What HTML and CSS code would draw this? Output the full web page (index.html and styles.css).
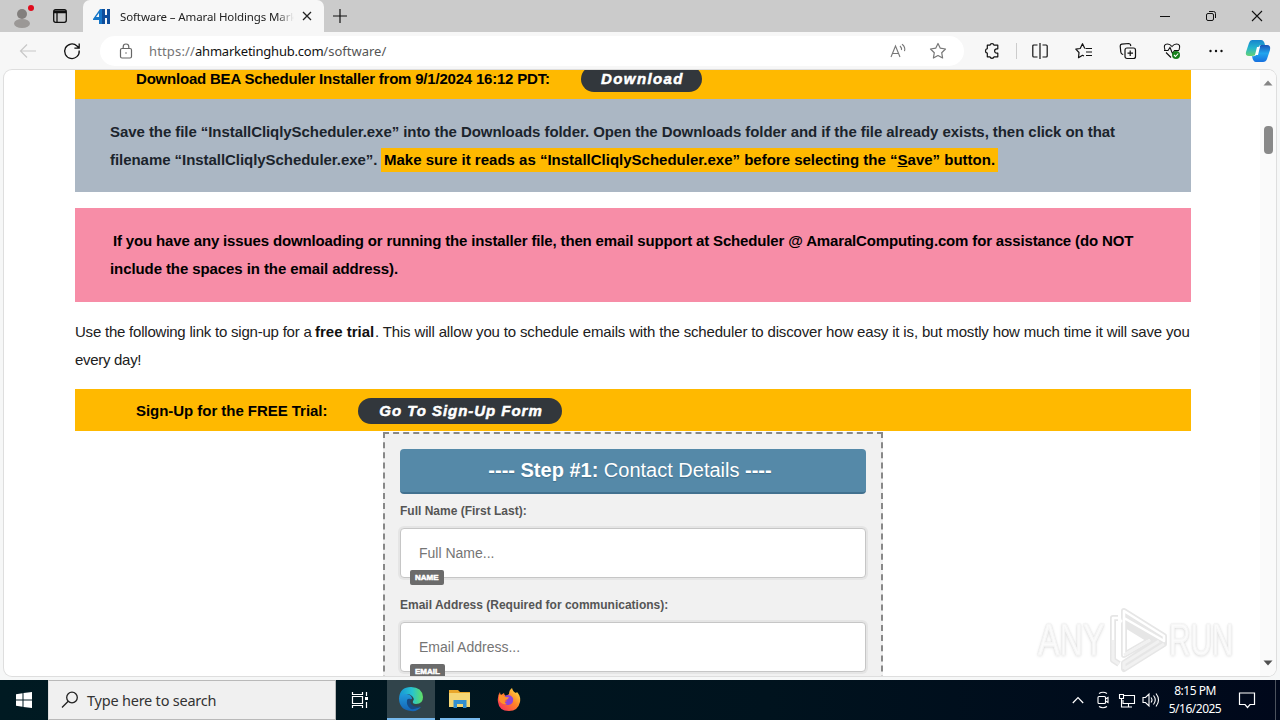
FILE: index.html
```html
<!DOCTYPE html>
<html lang="en">
<head>
<meta charset="utf-8">
<title>Software – Amaral Holdings Marketing Hub</title>
<link rel="stylesheet" href="styles.css">
</head>
<body>
<div class="desktop">
  <header class="tabbar">
    <svg class="profile" width="24" height="28" viewBox="0 0 24 28"><circle cx="12" cy="12" r="5" fill="#827f7d"/><ellipse cx="12" cy="21.500" rx="8" ry="4.500" fill="#9b9896"/><circle cx="21" cy="6" r="3" fill="#e00b1c"/></svg>
    <svg class="workspaces" width="16" height="16" viewBox="0 0 16 16" fill="none" stroke="#111" stroke-width="1.3"><rect x="1.7" y="1.7" width="12.6" height="12.6" rx="2"/><path d="M2 4.5h12M5 5v9" /><path d="M2 3.4h12" stroke-width="2"/></svg>
    <div class="tab">
      <svg width="17" height="17" viewBox="0 0 17 17"><path d="M0 11 7 1h3v15H6v-4H0z M6 5 3 9h3z" fill="#1576c8" fill-rule="evenodd"/><path d="M9 1h3v6h2V1h3v15h-3v-6h-2v6H9z" fill="#0e4d9b"/></svg>
      <span class="tab-title">Software – Amaral Holdings Mark</span>
      <svg class="tab-close" width="10" height="10" viewBox="0 0 10 10" stroke="#222" stroke-width="1.3"><path d="M1 1l8 8M9 1l-8 8"/></svg>
    </div>
    <svg class="newtab" width="14" height="14" viewBox="0 0 14 14" stroke="#111" stroke-width="1.2"><path d="M7 0v14M0 7h14"/></svg>
    <div class="window-controls">
      <svg width="12" height="12" viewBox="0 0 12 12" stroke="#111"><path d="M1 6.5h10"/></svg>
      <svg width="12" height="12" viewBox="0 0 12 12" fill="none" stroke="#111"><rect x="1.5" y="3.5" width="7" height="7" rx="1.5"/><path d="M4 1.5h4.5a2 2 0 0 1 2 2V8"/></svg>
      <svg width="12" height="12" viewBox="0 0 12 12" stroke="#111" stroke-width="1.1"><path d="M1 1l10 10M11 1L1 11"/></svg>
    </div>
  </header>
  <div class="toolbar">
    <svg class="back" width="18" height="16" viewBox="0 0 18 16" fill="none" stroke="#c8c8c8" stroke-width="1.2"><path d="M17 8H2M8 1.500L1.500 8 8 14.500"/></svg>
    <svg class="reload" width="18" height="18" viewBox="0 0 18 18" fill="none" stroke="#111" stroke-width="1.3"><path d="M16.200 8.500A7.300 7.300 0 1 1 14 4l1.800 1.800M16.200 1.500v4.600h-4.800"/></svg>
    <div class="address">
      <svg width="14" height="16" viewBox="0 0 14 16" fill="none" stroke="#666" stroke-width="1.2"><rect x="1.500" y="5.500" width="11" height="9.500" rx="1.500"/><path d="M4.200 5V3.800a2.800 2.800 0 0 1 5.600 0V5"/><circle cx="7" cy="10" r=".7" fill="#555" stroke="none"/></svg>
      <span class="url"><span class="dim">https://</span><span class="host">ahmarketinghub.com</span><span class="path">/software/</span></span>
      <svg class="read" width="17" height="16" viewBox="0 0 17 16" fill="none" stroke="#777" stroke-width="1.1"><path d="M1 14 5.500 3 10 14M2.500 10.500h6M10 3q2 2 1.500 4M12 1.200q3.800 2.800 2.500 7"/></svg>
      <svg class="fav" width="18" height="18" viewBox="0 0 18 18" fill="none" stroke="#777" stroke-width="1.2" stroke-linejoin="round"><path d="M9 1.500 11.300 6.200 16.500 7 12.700 10.700 13.600 16 9 13.500 4.400 16 5.300 10.700 1.500 7 6.700 6.200z"/></svg>
    </div>
    <div class="tools">
      <svg width="18" height="18" viewBox="0 0 18 18" fill="none" stroke="#111" stroke-width="1.200" stroke-linejoin="round"><path d="M4.300 3.200h2.600a2.200 2.200 0 0 1 4.200 0h3.700v3.600h-1a2.200 2.200 0 0 0 0 4.400h1v3.600h-3.700a2.200 2.200 0 0 1-4.200 0H4.300v-3.600a2.300 2.300 0 0 1 0-4.500z"/></svg>
      <i class="divider"></i>
      <svg width="18" height="18" viewBox="0 0 18 18" fill="none" stroke="#111" stroke-width="1.200"><path d="M6.500 3H2.800Q1.800 3 1.800 4v10q0 1 1 1h3.700M11.500 3h3.700q1 0 1 1v10q0 1-1 1h-3.700M9 1v16"/></svg>
      <svg width="18" height="18" viewBox="0 0 18 18" fill="none" stroke="#111" stroke-width="1.200" stroke-linejoin="round"><path d="M10.500 6.500H17M11 10h6M11 13.500h6M9.800 6.500 7.500 1.700 5.200 6.500.800 7.200 4 10.500 3.500 15.700 7.500 13.300 9 14"/></svg>
      <svg width="18" height="18" viewBox="0 0 18 18" fill="none" stroke="#111" stroke-width="1.200"><rect x="6" y="6" width="10.500" height="10.500" rx="2"/><path d="M11.200 8.500v5.500M8.500 11.200H14M4.200 12.500 3 12Q2 11.500 1.800 10L1.200 4q0-1.500 1.500-1.800l7-.7q1.300 0 1.800 1.300l.3 1.200"/></svg>
      <svg width="18" height="18" viewBox="0 0 18 18" fill="none" stroke="#111" stroke-width="1.100"><path d="M2 8Q-.2 2 4.500 2 7 2 9 4.500 11 2 13.500 2 18.200 2 16 8M1 8.500h4l2-3 2.500 6 2-3H16M3 10.500 8 15.500"/><circle cx="13" cy="13" r="4" fill="#16801b" stroke="none"/><path d="m11 13 1.500 1.500 2.700-3" stroke="#fff"/></svg>
      <svg width="18" height="18" viewBox="0 0 18 18" fill="#111"><circle cx="3.500" cy="9" r="1.200"/><circle cx="9" cy="9" r="1.200"/><circle cx="14.500" cy="9" r="1.200"/></svg>
    </div>
    <svg class="copilot" width="26" height="24" viewBox="0 0 26 24"><defs><linearGradient id="cp" x1="0" y1="0" x2="0" y2="1"><stop stop-color="#1684ce"/><stop offset=".5" stop-color="#24b5ce"/><stop offset="1" stop-color="#65d274"/></linearGradient><linearGradient id="cq" x1="0" y1="0" x2="0" y2="1"><stop stop-color="#1750b4"/><stop offset=".5" stop-color="#20a5ee"/><stop offset="1" stop-color="#1670df"/></linearGradient></defs><path d="M7 1h9q3 0 4 5h-4q-2 0-3 3l-2 6q-1 2-4 2H4q-4 0-3-4L4 4q1-3 3-3z" fill="url(#cp)"/><path d="M19 6h3q4 0 3 5l-3 9q-1 3-4 3h-7q-3 0-4-6 3 1 5-2l3-8q1-2 4-1z" fill="url(#cq)"/><path d="M12 8h3l-2 8h-3z" fill="#fff"/></svg>
  </div>
  <div class="viewport">
    <main class="page">
      <div class="bar bar-top"><b class="t-download">Download BEA Scheduler Installer from 9/1/2024 16:12 PDT:</b><a class="pill p-download">Download</a></div>
      <div class="note gray">
        <div class="line"><b class="t-save1">Save the file “InstallCliqlyScheduler.exe” into the Downloads folder. Open the Downloads folder and if the file already exists, then click on that</b></div>
        <div class="line"><b class="t-save2">filename “InstallCliqlyScheduler.exe”.</b><mark class="t-mark">Make sure it reads as “InstallCliqlyScheduler.exe” before selecting the “<u>S</u>ave” button.</mark></div>
      </div>
      <div class="note pink">
        <div class="line"><b class="t-issue1">If you have any issues downloading or running the installer file, then email support at Scheduler @ AmaralComputing.com for assistance (do NOT</b></div>
        <div class="line"><b class="t-issue2">include the spaces in the email address).</b></div>
      </div>
      <div class="para">
        <div class="line"><span class="t-use1">Use the following link to sign-up for a </span><b class="t-free">free trial</b><span class="t-use2">. This will allow you to schedule emails with the scheduler to discover how easy it is, but mostly how much time it will save you</span></div>
        <div class="line"><span class="t-every">every day!</span></div>
      </div>
      <div class="bar"><b class="t-signup">Sign-Up for the FREE Trial:</b><a class="pill p-signup">Go To Sign-Up Form</a></div>
      <form class="form">
        <h2 class="step"><b>---- Step #1:</b> Contact Details <b>----</b></h2>
        <label class="label">Full Name (First Last):</label>
        <div class="field"><span>Full Name...</span><em class="tag">NAME</em></div>
        <label class="label">Email Address (Required for communications):</label>
        <div class="field"><span>Email Address...</span><em class="tag">EMAIL</em></div>
      </form>
    </main>
    <aside class="scrollbar">
      <svg width="10" height="6" viewBox="0 0 10 6"><path d="M0.500 5.500 5 .5l4.500 5z" fill="#858585"/></svg>
      <i class="thumb"></i>
      <svg class="down" width="10" height="6" viewBox="0 0 10 6"><path d="M.5.5 5 5.500 9.500.5z" fill="#505050"/></svg>
    </aside>
    <div class="watermark">
      <span class="wm wm-any">ANY</span>
      <svg width="62" height="66" viewBox="0 0 62 66" fill="none" stroke-linejoin="round"><g stroke="#e6e6e6" stroke-width="6"><path d="M17 4 57 29v8L17 62v-6l35-23L17 11zM17 17v31l26-15zM11 11H6v42l6 4"/></g><g stroke="#fff" stroke-width="2.500"><path d="M17 11V4l40 25v5L17 11v37l26-15M11 11H6v22"/></g><g stroke="#f1f1f1" stroke-width="3"><path d="M6 33v20l6 4M17 48l26-15M17 62v-6l35-22M17 62l40-25"/></g></svg>
      <span class="wm wm-run">RUN</span>
    </div>
  </div>
  <footer class="taskbar">
    <div class="start"><svg width="16" height="16" viewBox="0 0 16 16" fill="#fff"><path d="M0 2.200 6.500 1.300V7.500H0zM7.500 1.100 16 0v7.500H7.500zM0 8.500h6.500v6.200L0 13.800zM7.500 8.500H16V16L7.500 14.900z"/></svg></div>
    <div class="search"><svg width="18" height="18" viewBox="0 0 18 18" fill="none" stroke="#222" stroke-width="1.300"><circle cx="11" cy="6.500" r="5.300"/><path d="M7.200 10.300 1 16.500"/></svg><span>Type here to search</span></div>
    <div class="app"><svg width="18" height="18" viewBox="0 0 18 18" fill="none" stroke="#fff" stroke-width="1.200"><path d="M1.500 1v2.500h10V1M1.500 17v-2.500h10V17M1.500 5.500h10v7h-10zM15.500 1v4M15.500 11v6"/><path d="M14 6h3v3h-3z" fill="#fff" stroke="none"/></svg></div>
    <div class="app active"><svg width="26" height="26" viewBox="0 0 26 26"><defs><linearGradient id="e1"><stop stop-color="#1694d6"/><stop offset=".55" stop-color="#28c4cf"/><stop offset="1" stop-color="#61df62"/></linearGradient><linearGradient id="e2" x1="0" y1="0" x2="0" y2="1"><stop stop-color="#219bdc"/><stop offset="1" stop-color="#1463b5"/></linearGradient></defs><path d="M1 12Q2 1 13 1q11 0 12 10 0 7-7 7-4 0-3-3 2-2-1-5Q9 5 1 12z" fill="url(#e1)"/><path d="M1 12q3-5 8-4 5 1 5 5-4 0-3 5 2 5 8 4l4-1q-4 5-10 4Q1 24 1 12z" fill="url(#e2)"/><path d="M9 14q-1 6 4 9 5 1 10-3-6 2-9-1-3-3-1-6-3-1-4 1z" fill="#174a84"/></svg></div>
    <div class="app open"><svg width="24" height="20" viewBox="0 0 24 20"><path d="M1 1h9l2 2h10v15H1z" fill="#e9a72b"/><path d="M1 4h21v14H1z" fill="#f5d674"/><path d="M5.500 19v-8h13v8h-3.500v-4H9v4z" fill="#338fd0"/></svg></div>
    <div class="app"><svg width="24" height="24" viewBox="0 0 24 24"><defs><linearGradient id="f1" x1="1" y1="0" x2="0" y2="1"><stop stop-color="#fff04a"/><stop offset=".45" stop-color="#ff8427"/><stop offset="1" stop-color="#f82463"/></linearGradient></defs><path d="M3 4q0 2 1 3l3-2q0 2 2 3l3-2q0-4 3-6 1 4 4 5l1-1q4 4 3 10-2 9-11 9Q2 23 1 14 0 8 3 4z" fill="url(#f1)"/><path d="M8 8q5-3 8 2 1 7-5 7-4 0-5-4 2 2 4 0l-3-2z" fill="#8e44d8"/><path d="M2 7q2-1 5 1 2 2 5 1-1 3-4 3-1 3 2 4-6 1-8-4z" fill="#ff922b"/></svg></div>
    <div class="tray">
      <svg width="12" height="8" viewBox="0 0 12 8" fill="none" stroke="#fff" stroke-width="1.200"><path d="M.8 7 6 1.500 11.200 7"/></svg>
      <svg class="cam" width="14" height="18" viewBox="0 0 14 18" fill="none" stroke="#fff" stroke-width="1.100"><rect x="2" y="5.500" width="7.500" height="7" rx="1"/><path d="m9.500 8 2.500-1.500v5L9.500 10M3 2.500Q7 0 11 2.500M3 15.500q4 2.500 8 0"/></svg>
      <svg width="18" height="16" viewBox="0 0 18 16" fill="none" stroke="#fff" stroke-width="1.100"><path d="M6 3.500h10.500v8H5V8M10.500 12v3M7 15h7M1.500 2.500h4v4h-4zM3.500 6.500v8.500H7"/></svg>
      <svg class="vol" width="18" height="16" viewBox="0 0 18 16" fill="none" stroke="#fff" stroke-width="1.100"><path d="M1 5.500h2.500L7 2v12l-3.500-3.500H1zM9 5.500q2 2.500 0 5M11.500 3.500q3.500 4.500 0 9M14 1.500q5 6.500 0 13"/></svg>
    </div>
    <div class="clock"><span>8:15 PM</span><span>5/16/2025</span></div>
    <svg class="action" width="18" height="18" viewBox="0 0 18 18" fill="none" stroke="#fff" stroke-width="1.200"><path d="M1.500 2h15v11.500H12L9.500 16.500 7 13.500H1.500z"/></svg>
    <i class="show-desktop"></i>
  </footer>
</div>
</body>
</html>
```
FILE: styles.css
```css
* { box-sizing: border-box; }
body { margin: 0; }
svg { display: block; flex: none; }
.desktop { width: 1280px; height: 720px; display: flex; flex-direction: column; overflow: hidden; background: #f6f7f7; font-family: "Liberation Sans", Arial, sans-serif; white-space: nowrap; }

.tabbar { height: 32px; flex: none; display: flex; align-items: center; background: #cbcbcb; }
.profile { margin-left: 10px; }
.workspaces { margin-left: 18px; }
.tab { width: 241px; height: 32px; margin-left: 15px; padding: 0 11px 0 10px; display: flex; align-items: center; background: #f7f7f7; border-radius: 7px 7px 0 0; }
.tab-title { width: 174px; margin-left: 10px; overflow: hidden; font: 11.5px "Noto Sans", sans-serif; letter-spacing: -.12px; color: #222; -webkit-mask-image: linear-gradient(90deg, #000 90%, transparent); mask-image: linear-gradient(90deg, #000 90%, transparent); }
.tab-close { margin-left: 8px; }
.newtab { margin-left: 9px; }
.window-controls { display: flex; gap: 34px; margin-left: auto; margin-right: 17px; }

.toolbar { height: 38px; flex: none; display: flex; align-items: center; background: #f7f7f7; }
.back { margin-left: 19px; }
.reload { margin-left: 26px; }
.address { width: 864px; height: 30px; margin-left: 19px; padding: 0 17px 0 19px; display: flex; align-items: center; background: #fff; border-radius: 15px; }
.url { margin-left: 16px; font: 13px "Noto Sans", sans-serif; display: flex; }
.dim, .path { color: #747474; }
.dim { letter-spacing: .15px; }
.path { color: #555; }
.host { color: #111; letter-spacing: -.22px; }
.read { margin-left: auto; }
.fav { margin-left: 22px; }
.tools { display: flex; align-items: center; gap: 26px; margin-left: 19px; }
.divider { width: 1px; height: 16px; background: #ccc; margin: 0 -12px 0 -11px; }
.copilot { margin-left: 20px; }

.viewport { position: relative; width: 1272px; height: 606px; flex: none; margin: 0 0 0 4px; display: flex; overflow: hidden; background: #fff; border-radius: 8px; box-shadow: 0 0 0 1px #dedede; }
.page { width: 1116px; height: 606px; margin-left: 71px; flex: none; color: #000; font-size: 15px; overflow: hidden; }
.bar { height: 42px; display: flex; align-items: center; padding-left: 61px; background: #ffb900; overflow: hidden; }
.bar b { line-height: 20px; flex: none; }
.bar-top { height: 29px; align-items: flex-start; }
.bar-top b { margin-top: -1px; }
.bar-top .pill { margin-top: -4px; }
.pill { height: 26px; display: flex; align-items: center; justify-content: center; flex: none; border-radius: 13px; background: #32373c; color: #fff; font-style: italic; font-weight: 700; letter-spacing: 1.4px; -webkit-text-stroke: .5px #fff; padding-left: 2px; padding-bottom: 2px; }
.p-download { width: 121px; }
.p-signup { width: 204px; margin-top: 1px; padding-bottom: 0; letter-spacing: .96px; }
.t-download { width: 445px; letter-spacing: -.205px; }
.t-signup { width: 222px; letter-spacing: -.04px; padding-top: 2px; }
.note { padding: 19px 35px; }
.gray { height: 93px; margin-bottom: 16px; background: #abb7c4; color: #1b242c; }
.pink { height: 94px; background: #f78da7; }
.line { height: 28px; display: flex; align-items: center; line-height: 28px; white-space: pre; }
.t-save1 { letter-spacing: -.064px; }
.t-save2 { width: 267px; letter-spacing: -.05px; }
.t-mark { height: 24px; margin-left: 4px; padding: 0 3px; line-height: 24px; font-weight: 700; background: #ffb900; color: #000; }
.t-issue1 { margin-left: 3px; letter-spacing: -.152px; }
.t-issue2 { letter-spacing: -.09px; }
.para { margin: 16px 0 15px; color: #202020; }
.t-use1 { width: 240px; letter-spacing: -.22px; }
.t-free { width: 60px; color: #111; }
.t-use2 { letter-spacing: -.158px; }
.t-every { letter-spacing: -.3px; }

.form { width: 500px; height: 270px; margin: 1px 0 0 308px; padding: 15px; border: 2px dashed #888; background: #f1f1f1; display: flex; flex-direction: column; }
.step { width: 466px; height: 45px; margin: 0; flex: none; border-radius: 4px; border-bottom: 2px solid #42718f; background: #5589a8; color: #fff; font-size: 20px; font-weight: 400; line-height: 42px; text-align: center; padding-right: 6px; text-shadow: 0 1px 1px #416f8b; }
.label { height: 34px; flex: none; line-height: 34px; font-size: 12px; font-weight: 700; color: #555; }
.field { position: relative; width: 466px; height: 50px; flex: none; padding-left: 18px; display: flex; align-items: center; border: 1px solid #c6c6c6; border-radius: 4px; background: #fff; box-shadow: 0 0 0 2px #e5e5e5; color: #757575; font-size: 14px; }
.field + .label { height: 44px; line-height: 54px; }
.tag { position: absolute; left: 9px; top: 41px; height: 15px; padding: 0 5px; border-radius: 2px; background: #6b6b6b; color: #fff; font-size: 8px; font-style: normal; font-weight: 700; line-height: 15px; -webkit-text-stroke: .5px #fff; }

.scrollbar { width: 16px; margin-left: auto; padding: 10px 3px 10px; display: flex; flex-direction: column; align-items: center; background: #fafafa; }
.thumb { width: 9px; height: 28px; margin-top: 40px; border-radius: 4px; background: #898989; }
.down { margin-top: auto; }
.watermark { position: absolute; left: 1034px; top: 537px; display: flex; align-items: center; }
.wm { display: block; font: 400 45px/66px "Liberation Sans", sans-serif; color: #fbfbfb; -webkit-text-stroke: 1.5px #f6f6f6; text-shadow: 0 0 2px #c4c4c4, 0 1px 4px #d4d4d4; transform-origin: left center; }
.wm-any { width: 69px; transform: scaleX(.72); }
.wm-run { width: 64px; transform: scaleX(.66); }

.taskbar { height: 40px; flex: none; margin-top: 4px; display: flex; align-items: center; background: linear-gradient(90deg, #001a22, #00131e 60%, #00081b); color: #fff; }
.start { width: 48px; display: flex; justify-content: center; }
.search { width: 288px; height: 40px; padding-left: 12px; display: flex; align-items: center; background: #f0f0f0; border: 1px solid #b9b9b9; border-left-color: #ddd; color: #333; font: 14.5px "Noto Sans", sans-serif; }
.search span { margin-left: 8px; letter-spacing: -.22px; }
.app { width: 48px; height: 40px; display: flex; align-items: center; justify-content: center; }
.active { margin-left: 3px; background: #31444b; border-bottom: 2px solid #76b9ed; width: 48px; }
.open { width: 40px; margin-left: 5px; border-bottom: 2px solid #76b9ed; }
.app.open + .app { margin-left: 5px; }
.tray { margin-left: auto; display: flex; align-items: center; gap: 8px; }
.cam { margin-left: 4px; }
.vol { margin-left: -2px; }
.clock { width: 58px; margin-left: 6px; display: flex; flex-direction: column; align-items: center; font: 12px/18px "Noto Sans", sans-serif; letter-spacing: -.5px; }
.action { margin-left: 14px; }
.show-desktop { width: 1px; height: 40px; margin: 0 4px 0 19px; background: #4b525d; }
```
